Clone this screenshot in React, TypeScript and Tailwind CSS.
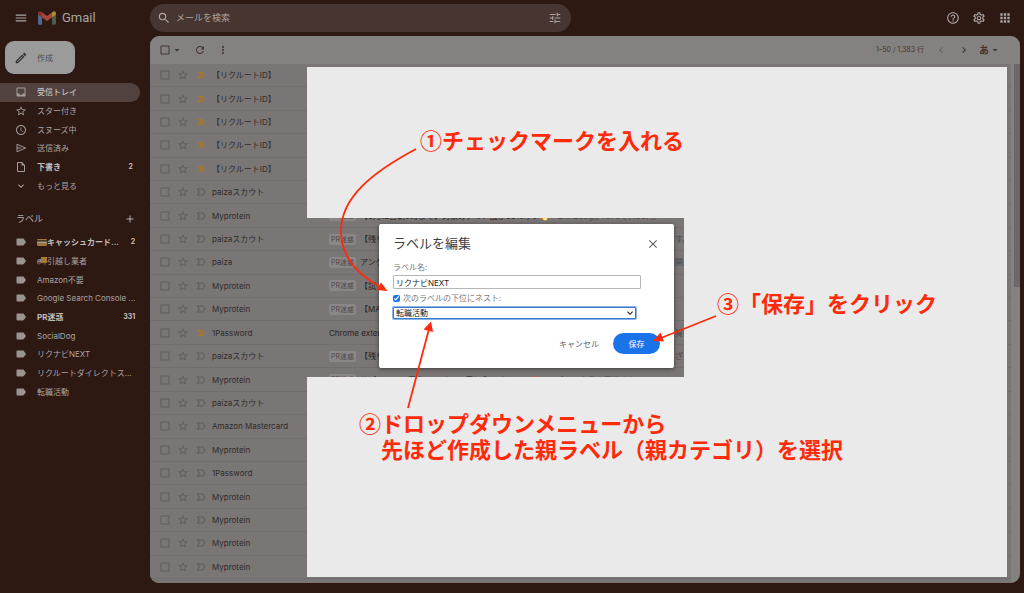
import React from "react";
import {
  MdMenu, MdSearch, MdTune, MdHelpOutline, MdOutlineSettings, MdApps, MdRefresh, MdMoreVert,
  MdChevronLeft, MdChevronRight, MdArrowDropDown, MdInbox, MdStarBorder, MdAccessTime,
  MdOutlineInsertDriveFile, MdExpandMore, MdAdd, MdLabel, MdClose, MdOutlineEdit,
  MdCheckBoxOutlineBlank, MdLabelImportantOutline,
} from "react-icons/md";

type Mail = { from: string; important?: boolean; tag?: boolean; subject?: string; rest?: string; end?: string };

const R: Mail = { from: "【リクルートID】", important: true };
const mails: Mail[] = [
  R, R, R, R, R,
  { from: "paizaスカウト" },
  { from: "Myprotein", tag: true, subject: "【8月12日朝9時まで】対象のアミノ酸が35%オフ🔥", rest: "EAA250gが¥870で(450円)" },
  { from: "paizaスカウト", tag: true, subject: "【残り", end: "す。" },
  { from: "paiza", tag: true, subject: "アンケ", end: "開示" },
  { from: "Myprotein", tag: true, subject: "【試" },
  { from: "Myprotein", tag: true, subject: "【MA" },
  { from: "1Password", important: true, subject: "Chrome exten", end: "質問" },
  { from: "paizaスカウト", tag: true, subject: "【残り", end: "ざい" },
  { from: "Myprotein", tag: true, subject: "サプリメント最大80%オフで手に入るチャンス🔥", rest: "アパレル商品も見逃せない" },
  { from: "paizaスカウト" },
  { from: "Amazon Mastercard" },
  { from: "Myprotein" },
  { from: "1Password" },
  { from: "Myprotein" },
  { from: "Myprotein" },
  { from: "Myprotein" },
  { from: "Myprotein" },
];

function SendIcon({ className }: { className?: string }) {
  return (
    <svg className={className} viewBox="0 0 24 24" fill="none" stroke="currentColor" strokeWidth="2" aria-hidden="true">
      <path d="M4 4.5L21 12L4 19.5V4.500ZM4 12H12" />
    </svg>
  );
}

const folders = [
  { name: "受信トレイ", icon: MdInbox, active: true },
  { name: "スター付き", icon: MdStarBorder },
  { name: "スヌーズ中", icon: MdAccessTime },
  { name: "送信済み", icon: SendIcon },
  { name: "下書き", icon: MdOutlineInsertDriveFile, count: "2" },
  { name: "もっと見る", icon: MdExpandMore },
];

const labels: { name: string; count?: string; art?: "card" | "truck" }[] = [
  { name: "キャッシュカード...", count: "2", art: "card" },
  { name: "引越し業者", art: "truck" },
  { name: "Amazon不要" },
  { name: "Google Search Console ..." },
  { name: "PR迷惑", count: "331" },
  { name: "SocialDog" },
  { name: "リクナビNEXT" },
  { name: "リクルートダイレクトス..." },
  { name: "転職活動" },
];

function GmailMark() {
  return (
    <svg className="h-[14px] w-[18px]" viewBox="0 0 18 14" aria-hidden="true">
      <path d="M0 2.2V12.6Q0 13.8 1.2 13.8H4V6.2L0 3Z" fill="#4c6791" />
      <path d="M18 2.2V12.6Q18 13.8 16.8 13.8H14V6.2L18 3Z" fill="#4a5c4b" />
      <path d="M14 1.4V6.4L18 3.4V2.2C18 .2 15.8-.5 14.5 .9Z" fill="#b08a3c" />
      <path d="M4 6.4V1.2L9 5L14 1.2V6.4L9 10.1Z" fill="#a4473a" />
      <path d="M0 2.2V3.4L4 6.4V1.2L3.5 .9C2.2-.5 0 .2 0 2.2Z" fill="#85352c" />
    </svg>
  );
}

function LabelArt({ kind }: { kind: "card" | "truck" }) {
  return kind === "card" ? (
    <svg className="h-[7px] w-[10px] shrink-0" viewBox="0 0 10 7" aria-hidden="true">
      <rect width="10" height="7" rx="1" fill="#9b753a" />
      <rect y="1.2" width="10" height="1.5" fill="#3b2b20" />
      <rect x="0" y="2.7" width="10" height="1.4" fill="#a39c8d" />
    </svg>
  ) : (
    <svg className="h-[8px] w-[10px] shrink-0" viewBox="0 0 10 8" aria-hidden="true">
      <path d="M4 0H10V6H4Z" fill="#a77a38" />
      <path d="M1.4 2H4V6.4H0V4.2Z" fill="#8b8987" />
      <path d="M1.6 2.6H3V4.2H.8Z" fill="#41627a" />
      <path d="M0 5H4V6.4H0Z" fill="#8e3b2c" />
      <circle cx="2" cy="6.7" r="1.1" fill="#57504c" />
      <circle cx="7.6" cy="6.7" r="1.1" fill="#57504c" />
    </svg>
  );
}

function ImportantMark() {
  return (
    <svg className="size-[12px] shrink-0" viewBox="0 0 24 24" aria-label="重要">
      <path d="M5 6H14.500L19.500 12L14.500 18H5L9.500 12Z" fill="#a67832" />
      <path d="M8 9.500H13L15 12L13 14.500H8" fill="none" stroke="#8d6a3a" strokeWidth="1" />
    </svg>
  );
}

function Sidebar() {
  return (
    <aside className="flex w-[150px] shrink-0 flex-col text-[8px]">
      <button className="mt-[5px] ml-[5px] flex h-[33px] w-[70px] items-center gap-[9px] rounded-[9px] bg-[#9b9b9b] pl-[9px] text-[#504c4b]">
        <MdOutlineEdit className="size-[14px] text-[#33302f]" />作成
      </button>
      <nav className="mt-[9px] grid h-28 auto-rows-fr text-[#aaa4a2]">
        {folders.map(({ name, icon: Icon, active, count }) => (
          <a
            key={name}
            href="#"
            className={`mr-[10px] flex items-center rounded-r-full pr-[7px] pl-[15px] ${active ? "bg-[#51423f] font-medium text-[#c2bfbe]" : ""} ${count ? "font-bold text-[#c2bfbe]" : ""}`}
          >
            <Icon className="mr-[10px] size-[12px] shrink-0 text-[#a29c9a]" />
            <span className="flex-1 whitespace-nowrap">{name}</span>
            {count && <span className="text-[7px]">{count}</span>}
          </a>
        ))}
      </nav>
      <div className="mt-4 flex h-[16px] items-center justify-between pr-[14px] pl-4 text-[9px] text-[#b3aeac]">
        <h2>ラベル</h2>
        <button aria-label="ラベルを作成"><MdAdd className="size-[12px]" /></button>
      </div>
      <nav className="mt-[6px] grid h-[168px] auto-rows-fr text-[#aaa4a2]">
        {labels.map(({ name, count, art }) => (
          <a key={name} href="#" className={`mr-[10px] flex items-center pr-[7px] pl-[15px] ${count ? "font-bold text-[#c2bfbe]" : ""}`}>
            <MdLabel className="mr-[10px] size-[12px] shrink-0 text-[#9b9592]" />
            <span className="flex flex-1 items-center whitespace-nowrap">
              {art && <LabelArt kind={art} />}{name}
            </span>
            {count && <span className="text-[7px]">{count}</span>}
          </a>
        ))}
      </nav>
    </aside>
  );
}

function MailRow({ mail }: { mail: Mail }) {
  return (
    <li className="flex items-center overflow-hidden border-b border-[#726e6d] pl-[9px] whitespace-nowrap">
      <MdCheckBoxOutlineBlank className="mr-[6px] size-[12px] shrink-0 text-[#5f5c5b]" />
      <MdStarBorder className="mr-[6px] size-[12px] shrink-0 text-[#5f5c5b]" />
      {mail.important
        ? <ImportantMark />
        : <MdLabelImportantOutline className="size-[12px] shrink-0 text-[#5f5c5b]" />}
      <span className="ml-[5px] w-[117px] shrink-0">{mail.from}</span>
      <span className="flex w-[346px] shrink-0 items-center">
        {mail.tag && <span className="mr-1 rounded-[2px] bg-[#8b8786] px-[2px] text-[7px] leading-[11px] text-[#4b4746]">PR迷惑</span>}
        <span className="text-[#282423]">{mail.subject}</span>
        {mail.rest && <span className="ml-2 text-[#4b4746]">{mail.rest}</span>}
      </span>
      <span className="text-[#4b4746]">{mail.end}</span>
    </li>
  );
}

function LabelDialog() {
  return (
    <div role="dialog" aria-labelledby="dialog-title" className="absolute top-[224px] left-[379px] w-[295px] rounded-[2px] bg-white px-[14px] pt-3 pb-[14px] text-[8px] text-[#77787b] shadow-[0_1px_4px_rgba(0,0,0,0.5)]">
      <header className="flex h-4 items-center justify-between">
        <h1 id="dialog-title" className="text-[13px] text-[#3c4043]">ラベルを編集</h1>
        <button aria-label="閉じる"><MdClose className="size-[14px] text-[#5f6368]" /></button>
      </header>
      <form>
        <label htmlFor="label-name" className="mt-2 block leading-[14px]">ラベル名:</label>
        <input id="label-name" defaultValue="リクナビNEXT" className="mt-px block h-[14px] w-[248px] rounded-[1px] border border-[#b5b5b5] px-[2px] text-[8px] text-[#222]" />
        <label className="mt-[2px] flex h-[14px] items-center gap-[3px]">
          <input type="checkbox" defaultChecked className="size-[7px] accent-[#1a73e8]" />次のラベルの下位にネスト:
        </label>
        <div className="relative mt-[2px] w-[243px]">
          <select aria-label="親ラベル" defaultValue="転職活動" className="block h-3 w-full appearance-none rounded-[1px] border border-[#3b78c9] bg-white px-[2px] text-[8px] leading-[10px] text-[#222] ring-1 ring-[#8db4ea]">
            <option>転職活動</option>
          </select>
          <MdExpandMore className="pointer-events-none absolute top-0 right-0 size-[12px] text-[#222]" />
        </div>
        <div className="mt-[14px] flex items-center justify-end gap-[14px]">
          <button type="button" className="text-[#5f6368]">キャンセル</button>
          <button type="button" className="h-[21px] w-[47px] rounded-full bg-[#1a73e8] text-white">保存</button>
        </div>
      </form>
    </div>
  );
}

function Annotations() {
  return (
    <div className="pointer-events-none absolute inset-0 font-['Noto_Sans_CJK_JP',sans-serif] text-[22px] leading-[26px] font-bold whitespace-nowrap text-[#ff2a0a]">
      <p className="absolute top-[126px] left-[420px]">①チェックマークを入れる</p>
      <p className="absolute top-[289px] left-[717px]">③「保存」をクリック</p>
      <p className="absolute top-[409px] left-[359px]">②ドロップダウンメニューから<br /><span className="pl-[22px]">先ほど作成した親ラベル（親カテゴリ）を選択</span></p>
      <svg className="absolute top-0 left-0" width="1024" height="593" viewBox="0 0 1024 593" fill="none" stroke="#ff2a0a" strokeWidth="1.8" aria-hidden="true">
        <path d="M416 149C373 172 341 197 341 231C341 258 359 275 379 286" />
        <path d="M387.500 291L376.500 290L381 282.500Z" fill="#ff2a0a" stroke="none" />
        <path d="M408 408L429 329" />
        <path d="M431 321.500L433 332L423.500 329.500Z" fill="#ff2a0a" stroke="none" />
        <path d="M716 316L661 338" />
        <path d="M653 341L660.500 332.500L664 341.500Z" fill="#ff2a0a" stroke="none" />
      </svg>
    </div>
  );
}

export default function App() {
  return (
    <div className="relative flex h-screen flex-col overflow-hidden bg-[#2d1812] font-[Inter,'Noto_Sans_CJK_JP',sans-serif]">
      <header className="flex h-9 shrink-0 items-center text-[#aaa4a2]">
        <div className="flex w-[150px] shrink-0 items-center pl-[14px]">
          <button aria-label="メインメニュー"><MdMenu className="size-[14px]" /></button>
          <span className="ml-[10px]"><GmailMark /></span>
          <span className="ml-[6px] font-[Roboto,sans-serif] text-[13px]">Gmail</span>
        </div>
        <label className="flex h-7 w-[421px] items-center rounded-full bg-[#463531] px-[7px]">
          <MdSearch className="size-[14px]" />
          <input aria-label="メールを検索" placeholder="メールを検索" className="ml-[5px] flex-1 text-[9px] placeholder:text-[#aaa4a2]" />
          <MdTune className="mr-[2px] size-[14px]" />
        </label>
        <div className="ml-auto flex gap-3 pr-3">
          <button aria-label="サポート"><MdHelpOutline className="size-[14px]" /></button>
          <button aria-label="設定"><MdOutlineSettings className="size-[14px]" /></button>
          <button aria-label="アプリ"><MdApps className="size-[14px]" /></button>
        </div>
      </header>
      <div className="flex min-h-0 flex-1 pb-[10px]">
        <Sidebar />
        <main className="mr-1 flex min-w-0 flex-1 flex-col overflow-hidden rounded-[9px] bg-[#848280]">
          <div className="flex h-7 shrink-0 items-center px-[9px] text-[#443331]">
            <MdCheckBoxOutlineBlank className="size-[12px]" />
            <MdArrowDropDown className="size-[12px]" />
            <MdRefresh className="ml-[11px] size-[12px]" />
            <MdMoreVert className="ml-[11px] size-[12px]" />
            <span className="ml-auto text-[7px]">1–50 / 1,383 行</span>
            <MdChevronLeft className="ml-[11px] size-[12px] text-[#64605e]" />
            <MdChevronRight className="ml-[11px] size-[12px]" />
            <span className="ml-[9px] text-[10px] font-bold">あ</span>
            <MdArrowDropDown className="mr-[10px] size-[12px]" />
          </div>
          <div className="flex min-h-0 flex-1">
            <ul className="grid min-w-0 flex-1 auto-rows-fr bg-[#7a7675] pb-1 text-[8px] text-[#302b2a]">
              {mails.map((mail, i) => <MailRow key={i} mail={mail} />)}
            </ul>
            <div className="w-[9px] pl-[3px]"><div className="h-[223px] bg-[#6b6869]" /></div>
          </div>
        </main>
      </div>
      <div className="pointer-events-none absolute top-[67px] right-[17px] bottom-[16px] left-[307px] grid grid-cols-[377px_1fr] grid-rows-[151px_159px_1fr]">
        <div className="col-span-2 bg-[#eaeaea]" />
        <div className="col-start-2 bg-[#eaeaea]" />
        <div className="col-span-2 bg-[#eaeaea]" />
      </div>
      <LabelDialog />
      <Annotations />
    </div>
  );
}
